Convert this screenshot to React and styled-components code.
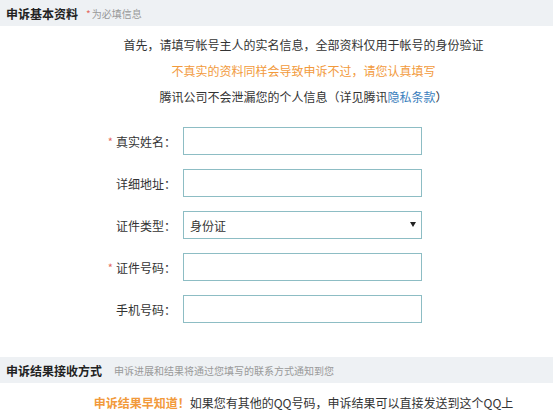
import React from 'react'
import styled, { createGlobalStyle } from 'styled-components'

const GlobalStyle = createGlobalStyle`
  body {
    margin: 0;
    background: #fff;
    font-family: "Noto Sans CJK SC", "Microsoft YaHei", sans-serif;
    color: #333;
  }
`

const Page = styled.div`
  width: 553px;
  height: 417px;
  overflow: hidden;
`

const SectionHead = styled.div`
  height: 26px;
  background: #eef1f4;
  display: flex;
  align-items: center;
  gap: ${p => p.gap || 8}px;
  padding: 0 6px;
  margin-top: ${p => p.top || 0}px;
  h3 {
    margin: 0;
    font-size: 12px;
    font-weight: 700;
    color: #222;
  }
  small {
    font-size: 10px;
    color: #999;
  }
  em {
    font-style: normal;
    color: #e46a5e;
    margin-right: 1px;
  }
`

const Notice = styled.div`
  padding: ${p => p.pad || '6px 0 0 54px'};
  text-align: center;
  font-size: 12px;
  p {
    margin: 0;
    line-height: 26px;
  }
  .warn {
    color: #f29a3b;
  }
  a {
    color: #3b80bd;
    text-decoration: none;
  }
  b {
    color: #f29a3b;
    font-weight: 700;
  }
`

const Form = styled.div`
  display: grid;
  grid-template-columns: 176px 239px;
  column-gap: 7px;
  row-gap: 14px;
  margin-top: 17px;
`

const Label = styled.label`
  display: flex;
  align-items: center;
  justify-content: flex-end;
  font-size: 12px;
  color: #333;
  height: 28px;
  &::before {
    content: ${p => (p.required ? "'*'" : "''")};
    color: #e46a5e;
    margin-right: 3px;
    font-size: 11px;
  }
`

const Input = styled.input`
  box-sizing: border-box;
  width: 239px;
  height: 28px;
  border: 1px solid #8dbdc4;
  outline: none;
  padding: 0 6px;
  font-size: 12px;
  font-family: inherit;
  background: #fff;
`

const SelectBox = styled.div`
  position: relative;
  width: 239px;
  height: 28px;
`

const Select = styled.select`
  box-sizing: border-box;
  appearance: none;
  width: 100%;
  height: 100%;
  border: 1px solid #8dbdc4;
  background: #fff;
  padding: 0 6px;
  font-size: 12px;
  font-family: inherit;
  color: #333;
  outline: none;
`

const Arrow = styled.svg`
  position: absolute;
  right: 6px;
  top: 11px;
  pointer-events: none;
`

const fields = [
  { label: '真实姓名：', required: true },
  { label: '详细地址：' },
  { label: '证件类型：', select: true },
  { label: '证件号码：', required: true },
  { label: '手机号码：' },
]

export default function App() {
  return (
    <Page>
      <GlobalStyle />
      <SectionHead>
        <h3>申诉基本资料</h3>
        <small><em>*</em>为必填信息</small>
      </SectionHead>
      <Notice>
        <p>首先，请填写帐号主人的实名信息，全部资料仅用于帐号的身份验证</p>
        <p className="warn">不真实的资料同样会导致申诉不过，请您认真填写</p>
        <p>腾讯公司不会泄漏您的个人信息（详见腾讯<a href="#">隐私条款</a>）</p>
      </Notice>
      <Form>
        {fields.map(f => (
          <React.Fragment key={f.label}>
            <Label required={f.required}>{f.label}</Label>
            {f.select ? (
              <SelectBox>
                <Select defaultValue="id">
                  <option value="id">身份证</option>
                </Select>
                <Arrow width="6" height="5" viewBox="0 0 6 5">
                  <path d="M0 0h6L3 5z" fill="#222" />
                </Arrow>
              </SelectBox>
            ) : (
              <Input type="text" />
            )}
          </React.Fragment>
        ))}
      </Form>
      <SectionHead top={34} gap={12}>
        <h3>申诉结果接收方式</h3>
        <small>申诉进展和结果将通过您填写的联系方式通知到您</small>
      </SectionHead>
      <Notice pad="7px 0 0 54px">
        <p><b>申诉结果早知道！</b>如果您有其他的QQ号码，申诉结果可以直接发送到这个QQ上</p>
      </Notice>
    </Page>
  )
}
